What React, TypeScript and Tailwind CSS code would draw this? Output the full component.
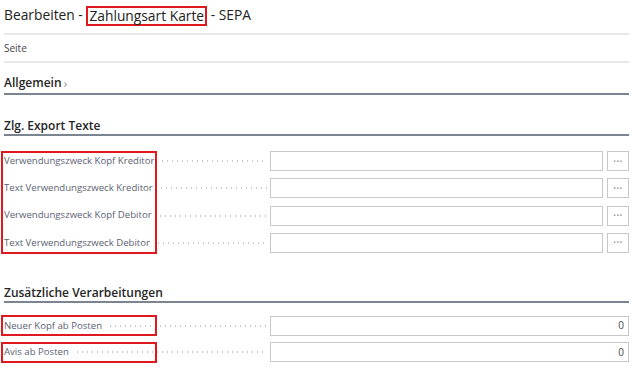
import React from "react";

const font = { fontFamily: '"Open Sans", "Noto Sans", Arial, sans-serif' };

function Row({
  label,
  value,
  lookup,
}: {
  label: string;
  value?: string;
  lookup?: boolean;
}) {
  return (
    <div className="flex h-[20px] items-center">
      <div className="flex w-[263px] shrink-0 items-center">
        <span className="whitespace-nowrap text-[9.6px] text-[#5b6272]">{label}</span>
        <span className="ml-[6px] h-[2px] flex-1 bg-[radial-gradient(circle,#c9c9c9_0.7px,transparent_1px)] bg-[length:5px_2px]" />
      </div>
      <div className="ml-[3px] flex h-[20px] flex-1 items-center justify-end border border-[#c8c8c8] bg-white px-[4px] text-[10px] text-[#444]">
        {value}
      </div>
      {lookup && (
        <div className="ml-[4px] flex h-[20px] w-[22px] items-center justify-center border border-[#c8c8c8] text-[7px] leading-none tracking-[0.5px] text-[#999]">
          •••
        </div>
      )}
    </div>
  );
}

function Heading({ children }: { children: React.ReactNode }) {
  return (
    <div className="flex h-[20px] items-end border-b-2 border-[#7b8491] text-[12px] font-semibold leading-[16px] text-[#262626]">
      {children}
    </div>
  );
}

export default function App() {
  const exportRows = [
    "Verwendungszweck Kopf Kreditor",
    "Text Verwendungszweck Kreditor",
    "Verwendungszweck Kopf Debitor",
    "Text Verwendungszweck Debitor",
  ];
  return (
    <div className="h-[367px] w-[633px] overflow-hidden bg-white pl-[4px] pr-[4px]" style={font}>
      <div className="flex h-[35px] items-center border-b-2 border-[#e8e8e8] pb-[2px] text-[13.8px] text-[#222]">
        <span>Bearbeiten -&nbsp;</span>
        <span className="border-2 border-[#e0191f] px-[1px] leading-[16px]">Zahlungsart Karte</span>
        <span>&nbsp;- SEPA</span>
      </div>
      <div className="flex h-[28px] items-center border-b-2 border-[#e8e8e8] text-[10px] text-[#444]">
        Seite
      </div>
      <div className="flex h-[32px] items-end border-b-2 border-[#7b8491] pb-[2px] text-[12px] font-semibold leading-[16px] text-[#262626]">
        Allgemein<span className="ml-[2px] text-[13px] font-normal text-[#999]">›</span>
      </div>

      <div className="mt-[21px]">
        <Heading>Zlg. Export Texte</Heading>
      </div>
      <div className="relative mt-[15px] flex flex-col gap-[7.3px]">
        <div className="pointer-events-none absolute -left-[3px] -top-[0.5px] h-[103px] w-[156px] border-2 border-[#e0191f]" />
        {exportRows.map((l) => (
          <Row key={l} label={l} lookup />
        ))}
      </div>

      <div className="mt-[30px]">
        <Heading>Zusätzliche Verarbeitungen</Heading>
      </div>
      <div className="mt-[13px] flex flex-col gap-[6.6px]">
        {["Neuer Kopf ab Posten", "Avis ab Posten"].map((l) => (
          <div key={l} className="relative">
            <div className="pointer-events-none absolute -left-[3px] -top-[0.5px] h-[21px] w-[156px] border-2 border-[#e0191f]" />
            <Row label={l} value="0" />
          </div>
        ))}
      </div>
    </div>
  );
}
